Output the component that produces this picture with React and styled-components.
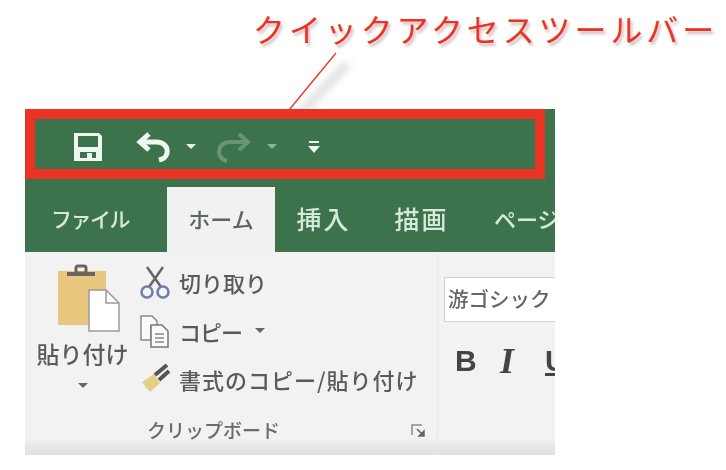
import React from 'react';
import styled, { createGlobalStyle } from 'styled-components';

const GlobalStyle = createGlobalStyle`
  html, body {
    margin: 0;
    padding: 0;
    background: #fff;
    font-family: "Noto Sans CJK JP", "Noto Sans", sans-serif;
  }
`;

const Page = styled.div`
  position: relative;
  width: 726px;
  height: 470px;
  overflow: hidden;
  display: flex;
  flex-direction: column;
`;

const Heading = styled.div`
  height: 109px;
  box-sizing: border-box;
  padding: 5px 0 0 253px;
  font-size: 32px;
  line-height: 46px;
  letter-spacing: 3.9px;
  white-space: nowrap;
  color: #ea3323;
  text-shadow: 2px 3px 3px rgba(120, 60, 60, 0.35);
`;

const Callout = styled.svg`
  position: absolute;
  left: 280px;
  top: 50px;
  width: 90px;
  height: 75px;
`;

const Excel = styled.div`
  width: 530px;
  height: 346px;
  margin-left: 25px;
  display: flex;
  flex-direction: column;
  overflow: hidden;
`;

const QuickBar = styled.div`
  position: relative;
  height: 70px;
  flex: none;
  background: #3c734d;
`;

const Highlight = styled.div`
  position: absolute;
  inset: 0 10px 0 0;
  border: 10px solid #ea3323;
`;

const QuickIcons = styled.div`
  height: 100%;
  box-sizing: border-box;
  padding: 5px 0 0 47px;
  display: flex;
  align-items: center;
  filter: blur(0.6px);
`;

const QuickIcon = styled.svg`
  display: block;
  flex: none;
  margin-left: ${({ $gap }) => $gap || 0}px;
  opacity: ${({ $dim }) => ($dim ? 0.3 : 1)};
`;

const TabBar = styled.div`
  height: 73px;
  flex: none;
  box-sizing: border-box;
  padding-top: 8px;
  background: #3c734d;
  display: flex;
  align-items: stretch;
  white-space: nowrap;
`;

const Tab = styled.div`
  width: ${({ $w }) => $w}px;
  flex: none;
  box-sizing: border-box;
  padding: 13px ${({ $pr }) => $pr || 0}px 0 ${({ $pl }) => $pl || 0}px;
  line-height: 36px;
  text-align: ${({ $pl }) => ($pl ? 'left' : 'center')};
  font-size: ${({ $size }) => $size || 24}px;
  font-weight: 500;
  letter-spacing: ${({ $ls }) => $ls || 0}px;
  color: ${({ $active }) => ($active ? '#5e6560' : '#d6eadb')};
  background: ${({ $active }) => ($active ? '#f1f1f1' : 'transparent')};
  filter: blur(0.7px);
`;

const Ribbon = styled.div`
  flex: 1;
  display: flex;
  background: linear-gradient(#f2f2f2 0, #f2f2f2 186px, #e2e2e2 200px);
`;

const ClipboardGroup = styled.div`
  width: 412px;
  flex: none;
  position: relative;
  border-right: 1px solid #e8e8e8;
  display: flex;
  flex-direction: column;
  color: #5a5a5a;
`;

const ClipboardMain = styled.div`
  height: 163px;
  display: flex;
  filter: blur(0.7px);
`;

const PasteButton = styled.div`
  width: 115px;
  flex: none;
  box-sizing: border-box;
  padding-top: 12px;
  display: flex;
  flex-direction: column;
  align-items: center;
  font-size: 23px;
  line-height: 32px;
`;

const PasteIcon = styled.svg`
  display: block;
  margin-left: 12px;
`;

const PasteLabel = styled.div`
  margin-top: 5px;
  font-weight: 500;
`;

const Caret = styled.div`
  width: 0;
  height: 0;
  flex: none;
  margin: ${({ $m }) => $m || 0};
  border-left: 5px solid transparent;
  border-right: 5px solid transparent;
  border-top: 5px solid ${({ $color }) => $color || '#666'};
`;

const ClipboardList = styled.div`
  display: flex;
  flex-direction: column;
  padding-top: 6px;
`;

const ClipRow = styled.div`
  height: 48.5px;
  display: flex;
  align-items: center;
  gap: 9px;
  font-size: 22px;
  font-weight: 500;
  letter-spacing: ${({ $ls }) => $ls || 0}px;
  white-space: nowrap;
`;

const RowIcon = styled.svg`
  display: block;
  flex: none;
`;

const GroupFooter = styled.div`
  flex: 1;
  padding: 0 0 0 122px;
  display: flex;
  font-size: 19px;
  font-weight: 500;
  line-height: 30px;
  color: #6b6b6b;
  filter: blur(0.6px);
`;

const Launcher = styled.svg`
  position: absolute;
  right: 0;
  top: 171px;
`;

const FontGroup = styled.div`
  flex: 1;
  padding: 25px 0 0 6px;
  overflow: hidden;
`;

const FontBox = styled.div`
  height: 45px;
  box-sizing: border-box;
  margin-right: -6px;
  padding-left: 3px;
  background: #fff;
  border: 1px solid #d2d2d2;
  border-right: none;
  font-size: 20.5px;
  font-weight: 500;
  line-height: 41px;
  color: #666;
  white-space: nowrap;
  filter: blur(0.6px);
`;

const FormatRow = styled.div`
  display: flex;
  align-items: center;
  padding: 22px 0 0 11px;
  filter: blur(0.6px);
`;

const FormatButton = styled.div`
  width: 45px;
  flex: none;
  color: #444;
  font-family: ${({ $serif }) => ($serif ? '"Liberation Serif", serif' : '"Liberation Sans", sans-serif')};
  font-size: ${({ $serif }) => ($serif ? 36 : 30)}px;
  line-height: 34px;
  font-weight: 700;
  font-style: ${({ $serif }) => ($serif ? 'italic' : 'normal')};
  text-decoration: ${({ $underline }) => ($underline ? 'underline' : 'none')};
`;

const App = () => (
  <Page>
    <GlobalStyle />
    <Heading>クイックアクセスツールバー</Heading>
    <Callout viewBox="0 0 90 75">
      <defs>
        <filter id="soft" x="-50%" y="-50%" width="200%" height="200%">
          <feGaussianBlur stdDeviation="4" />
        </filter>
      </defs>
      <path d="M22 62 L67 14" stroke="#999" strokeWidth="6" opacity="0.45" filter="url(#soft)" />
      <path d="M9 60 L56 3" stroke="#ea3323" strokeWidth="1.3" fill="none" />
    </Callout>
    <Excel>
      <QuickBar>
        <Highlight />
        <QuickIcons>
          <QuickIcon width="32" height="32" viewBox="0 0 32 32">
            <path fillRule="evenodd" fill="#eef7ef" d="M2 2h25l3 3v25H2z M6 5v11h20V5z M8 21v6h16v-6z" />
            <rect x="15" y="22" width="5" height="5" fill="#eef7ef" />
          </QuickIcon>
          <QuickIcon $gap="32" width="36" height="32" viewBox="0 0 36 32">
            <path d="M13 3 L4 11 L13 19" fill="none" stroke="#eef7ef" strokeWidth="5" />
            <path d="M5 11 H20 C28 11 32 16 31 22 C30 27 27 28 23 29" fill="none" stroke="#eef7ef" strokeWidth="5" />
          </QuickIcon>
          <Caret $m="0 0 0 14px" $color="#e8f3ea" />
          <QuickIcon $gap="21" $dim width="34" height="32" viewBox="0 0 34 32">
            <path d="M22 3 L31 11 L22 19" fill="none" stroke="#cfe3d4" strokeWidth="4" />
            <path d="M30 11 H14 C5 11 2 16 2 22 C3 27 6 29 10 30" fill="none" stroke="#cfe3d4" strokeWidth="4" />
          </QuickIcon>
          <Caret $m="0 0 0 16px" $color="#8fb39a" />
          <QuickIcon $gap="30" width="14" height="14" viewBox="0 0 14 14">
            <rect x="2" y="1" width="10" height="2" fill="#eef7ef" />
            <path d="M1 6h12l-6 7z" fill="#eef7ef" />
          </QuickIcon>
        </QuickIcons>
      </QuickBar>
      <TabBar>
        <Tab $w="142" $pr="12" $size="21" $ls="-1.5">ファイル</Tab>
        <Tab $w="108" $active $size="22">ホーム</Tab>
        <Tab $w="97" $size="25" $ls="2">挿入</Tab>
        <Tab $w="99" $size="25" $ls="2">描画</Tab>
        <Tab $w="84" $pl="23" $size="22">ページ</Tab>
      </TabBar>
      <Ribbon>
        <ClipboardGroup>
          <ClipboardMain>
            <PasteButton>
              <PasteIcon width="64" height="68" viewBox="0 0 64 68">
                <rect x="1" y="7" width="48" height="54" fill="#e9c77f" />
                <path d="M10 10h28" stroke="#6e645e" strokeWidth="4" />
                <rect x="19" y="2" width="10" height="7" rx="2" fill="none" stroke="#6e645e" strokeWidth="3" />
                <path d="M32 26h17l13 13v28H32z" fill="#fff" stroke="#9a9a9a" strokeWidth="1.5" />
                <path d="M49 26v13h13" fill="none" stroke="#9a9a9a" strokeWidth="1.5" />
              </PasteIcon>
              <PasteLabel>貼り付け</PasteLabel>
              <Caret $m="14px 0 0 0" />
            </PasteButton>
            <ClipboardList>
              <ClipRow>
                <RowIcon width="30" height="34" viewBox="0 0 30 34">
                  <path d="M7 2 L21 22 M23 2 L9 22" stroke="#666" strokeWidth="2.5" fill="none" />
                  <circle cx="7" cy="27" r="5.5" fill="none" stroke="#6b7fa8" strokeWidth="2.5" />
                  <circle cx="23" cy="27" r="5.5" fill="none" stroke="#6b7fa8" strokeWidth="2.5" />
                </RowIcon>
                切り取り
              </ClipRow>
              <ClipRow $ls="-1">
                <RowIcon width="30" height="34" viewBox="0 0 30 34">
                  <path d="M1 2h11l5 5v5H11v14H1z" fill="#fafafa" stroke="#8a8a8a" strokeWidth="1.5" />
                  <path d="M11 11h11l6 6v16H11z" fill="#fafafa" stroke="#777" strokeWidth="1.5" />
                  <path d="M15 20h9M15 24h9M15 28h9" stroke="#888" strokeWidth="1.5" />
                </RowIcon>
                コピー
                <Caret $m="0 0 0 4px" />
              </ClipRow>
              <ClipRow $ls="1">
                <RowIcon width="30" height="34" viewBox="0 0 30 34">
                  <path d="M2 20 L14 12 L20 21 L10 30 Q6 26 2 20z" fill="#e3cf85" />
                  <path d="M15 13 L27 3 M19 18 L29 9" stroke="#555" strokeWidth="4" />
                </RowIcon>
                書式のコピー/貼り付け
              </ClipRow>
            </ClipboardList>
          </ClipboardMain>
          <GroupFooter>クリップボード</GroupFooter>
          <Launcher width="26" height="16" viewBox="0 0 26 16">
            <path d="M1 12V2h10" fill="none" stroke="#8a8a8a" strokeWidth="1.5" />
            <path d="M6 6l7 7M13 8v5H8z" stroke="#666" strokeWidth="1.5" fill="#666" />
          </Launcher>
        </ClipboardGroup>
        <FontGroup>
          <FontBox>游ゴシック</FontBox>
          <FormatRow>
            <FormatButton>B</FormatButton>
            <FormatButton $serif>I</FormatButton>
            <FormatButton $underline>U</FormatButton>
          </FormatRow>
        </FontGroup>
      </Ribbon>
    </Excel>
  </Page>
);

export default App;
